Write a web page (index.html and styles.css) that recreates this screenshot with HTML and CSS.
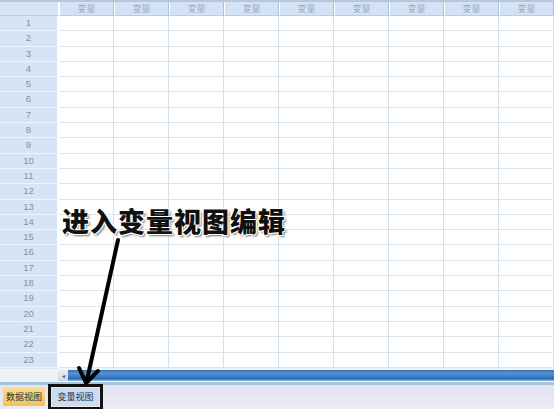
FILE: index.html
```html
<!DOCTYPE html>
<html lang="zh">
<head>
<meta charset="utf-8">
<link rel="stylesheet" href="styles.css">
</head>
<body>
<div class="app">
  <div class="grid" id="grid">
    <div class="corner"></div>
    <div class="colhead">变量</div><div class="colhead">变量</div><div class="colhead">变量</div>
    <div class="colhead">变量</div><div class="colhead">变量</div><div class="colhead">变量</div>
    <div class="colhead">变量</div><div class="colhead">变量</div><div class="colhead">变量</div>
  </div>
  <div class="scrollrow">
    <div class="scrollpad"></div>
    <div class="scrollbar">
      <div class="scrollbtn">◂</div>
      <div class="scrolltrack"></div>
    </div>
  </div>
  <div class="sep"></div>
  <div class="tabs">
    <div class="tab tab-data">数据视图</div>
    <div class="tab tab-var">变量视图</div>
  </div>

  <div class="note">进入变量视图编辑</div>
  <svg class="arrow" width="554" height="409" viewBox="0 0 554 409">
    <line x1="118" y1="240" x2="87" y2="380" stroke="#000" stroke-width="4" stroke-linecap="round"/>
    <polyline points="79,368 86,383 98,371" fill="none" stroke="#000" stroke-width="4" stroke-linecap="round" stroke-linejoin="round"/>
  </svg>
</div>
<script src="script.js"></script>
</body>
</html>
```
FILE: script.js
```js
var g = document.getElementById('grid');
for (var r = 1; r <= 23; r++) {
  var h = document.createElement('div');
  h.className = 'rowhead';
  h.textContent = r;
  g.appendChild(h);
  for (var c = 0; c < 9; c++) {
    var d = document.createElement('div');
    d.className = 'cell';
    g.appendChild(d);
  }
}
```
FILE: styles.css
```css
html, body {
  margin: 0;
  padding: 0;
}
body {
  width: 554px;
  height: 409px;
  overflow: hidden;
  background: #ffffff;
  font-family: "Noto Sans CJK SC", "Noto Sans", sans-serif;
}
.app {
  position: relative;
  width: 554px;
  height: 409px;
  overflow: hidden;
  display: flex;
  flex-direction: column;
}
.grid {
  display: grid;
  grid-template-columns: 59px repeat(9, 55px);
  grid-template-rows: 14px repeat(23, 15.3px);
  border-top: 2px solid #b7c7db;
  width: 554px;
  overflow: hidden;
}
.corner {
  background: #d5e3f5;
  border-right: 1px solid #ffffff;
  border-bottom: 1px solid #b9cde6;
}
.colhead {
  background: #d3e2f5;
  border-left: 1px solid #ffffff;
  border-right: 1px solid #a9bfdc;
  border-bottom: 1px solid #b9cde6;
  font-size: 9px;
  font-weight: 300;
  line-height: 13px;
  color: #8593a8;
  text-align: center;
}
.rowhead {
  background: #d6e4f6;
  border-right: 1px solid #ffffff;
  border-bottom: 1px solid #eef4fb;
  margin-right: 1px;
  font-size: 9.5px;
  line-height: 14px;
  color: #8391a6;
  text-align: center;
  font-family: "Liberation Sans", Arial, sans-serif;
}
.cell {
  background: #ffffff;
  border-right: 1px solid #d3e0ea;
  border-bottom: 1px solid #d9e5ee;
}
.scrollrow {
  display: flex;
  height: 14px;
  background: #f2f4f8;
}
.scrollpad {
  width: 58px;
  background: #eef1f6;
  border-top: 1px solid #dde5ef;
}
.scrollbar {
  flex: 1;
  display: flex;
  padding-top: 2px;
}
.scrollbtn {
  width: 10px;
  height: 11px;
  background: linear-gradient(#e7eef8, #c7d7ec);
  color: #556;
  font-size: 6px;
  line-height: 11px;
  text-align: center;
}
.scrolltrack {
  flex: 1;
  height: 11px;
  background: linear-gradient(#3670b8 0, #5692d4 30%, #3d7ac2 60%, #2f68ad 80%, #8fc0e4 100%);
}
.sep {
  height: 3px;
  background: #a9c4d9;
}
.tabs {
  flex: 1;
  display: flex;
  align-items: flex-start;
  gap: 7px;
  padding: 3px 0 0 3px;
  background: linear-gradient(#e2e3f1, #ececf6);
}
.tab {
  height: 18px;
  font-size: 9px;
  line-height: 18px;
  color: #2a3140;
  padding: 0 4px;
}
.tab-data {
  background: linear-gradient(#f9dc86, #efc35a);
  width: 36px;
  overflow: hidden;
  white-space: nowrap;
  padding: 0 3px;
}
.tab-var {
  background: #cbdcf1;
  outline: 3px solid #111;
  outline-offset: 1px;
  width: 39px;
  text-align: center;
}
.note {
  position: absolute;
  left: 62px;
  top: 204px;
  font-size: 27px;
  font-weight: 900;
  line-height: 34px;
  color: #111;
  letter-spacing: 1px;
  text-shadow: 1px 1px 0 #fff, -1px -1px 0 #fff, 1px -1px 0 #fff, -1px 1px 0 #fff, 2px 2px 2px #777;
}
.arrow {
  position: absolute;
  left: 0;
  top: 0;
  pointer-events: none;
}
```
